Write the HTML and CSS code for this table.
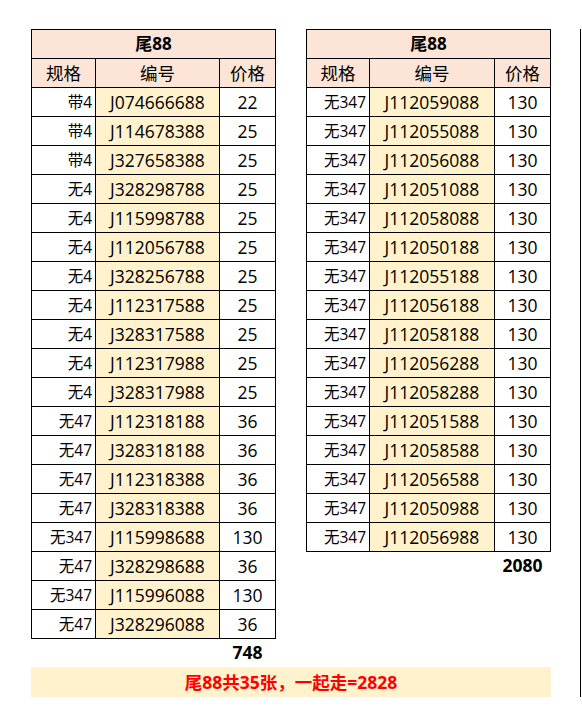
FILE: index.html
```html
<!DOCTYPE html>
<html lang="zh">
<head>
<meta charset="utf-8">
<title>尾88</title>
<link rel="stylesheet" href="styles.css">
</head>
<body>
<div class="page">
  <div class="sheet">
    <div class="tables">
      <div class="block">
        <div class="tbl tbl-l">
          <div class="title">尾88</div>
          <div class="hd">规格</div><div class="hd">编号</div><div class="hd">价格</div>
          <div class="spec">带4</div><div class="code">J074666688</div><div class="price">22</div>
          <div class="spec">带4</div><div class="code">J114678388</div><div class="price">25</div>
          <div class="spec">带4</div><div class="code">J327658388</div><div class="price">25</div>
          <div class="spec">无4</div><div class="code">J328298788</div><div class="price">25</div>
          <div class="spec">无4</div><div class="code">J115998788</div><div class="price">25</div>
          <div class="spec">无4</div><div class="code">J112056788</div><div class="price">25</div>
          <div class="spec">无4</div><div class="code">J328256788</div><div class="price">25</div>
          <div class="spec">无4</div><div class="code">J112317588</div><div class="price">25</div>
          <div class="spec">无4</div><div class="code">J328317588</div><div class="price">25</div>
          <div class="spec">无4</div><div class="code">J112317988</div><div class="price">25</div>
          <div class="spec">无4</div><div class="code">J328317988</div><div class="price">25</div>
          <div class="spec">无47</div><div class="code">J112318188</div><div class="price">36</div>
          <div class="spec">无47</div><div class="code">J328318188</div><div class="price">36</div>
          <div class="spec">无47</div><div class="code">J112318388</div><div class="price">36</div>
          <div class="spec">无47</div><div class="code">J328318388</div><div class="price">36</div>
          <div class="spec">无347</div><div class="code">J115998688</div><div class="price">130</div>
          <div class="spec">无47</div><div class="code">J328298688</div><div class="price">36</div>
          <div class="spec">无347</div><div class="code">J115996088</div><div class="price">130</div>
          <div class="spec">无47</div><div class="code">J328296088</div><div class="price">36</div>
        </div>
        <div class="total tbl-l"><div class="sum">748</div></div>
      </div>
      <div class="block">
        <div class="tbl tbl-r">
          <div class="title">尾88</div>
          <div class="hd">规格</div><div class="hd">编号</div><div class="hd">价格</div>
          <div class="spec">无347</div><div class="code">J112059088</div><div class="price">130</div>
          <div class="spec">无347</div><div class="code">J112055088</div><div class="price">130</div>
          <div class="spec">无347</div><div class="code">J112056088</div><div class="price">130</div>
          <div class="spec">无347</div><div class="code">J112051088</div><div class="price">130</div>
          <div class="spec">无347</div><div class="code">J112058088</div><div class="price">130</div>
          <div class="spec">无347</div><div class="code">J112050188</div><div class="price">130</div>
          <div class="spec">无347</div><div class="code">J112055188</div><div class="price">130</div>
          <div class="spec">无347</div><div class="code">J112056188</div><div class="price">130</div>
          <div class="spec">无347</div><div class="code">J112058188</div><div class="price">130</div>
          <div class="spec">无347</div><div class="code">J112056288</div><div class="price">130</div>
          <div class="spec">无347</div><div class="code">J112058288</div><div class="price">130</div>
          <div class="spec">无347</div><div class="code">J112051588</div><div class="price">130</div>
          <div class="spec">无347</div><div class="code">J112058588</div><div class="price">130</div>
          <div class="spec">无347</div><div class="code">J112056588</div><div class="price">130</div>
          <div class="spec">无347</div><div class="code">J112050988</div><div class="price">130</div>
          <div class="spec">无347</div><div class="code">J112056988</div><div class="price">130</div>
        </div>
        <div class="total tbl-r"><div class="sum">2080</div></div>
      </div>
    </div>
    <div class="banner">尾88共35张，一起走=2828</div>
  </div>
  <div class="vline"></div>
</div>
</body>
</html>
```

FILE: styles.css
```css
html, body {
  margin: 0;
  padding: 0;
  background: #fff;
}

body {
  font-family: "Open Sans", "Noto Sans CJK SC", sans-serif;
  color: #000;
}

.page {
  display: flex;
  align-items: stretch;
  padding: 29px 0 0 31px;
}

.sheet {
  display: flex;
  flex-direction: column;
  width: 520px;
}

.tables {
  display: flex;
  align-items: flex-start;
  gap: 30px;
}

.block {
  display: flex;
  flex-direction: column;
}

.tbl {
  display: grid;
  grid-auto-rows: 28px;
  gap: 1px;
  padding: 1px;
  background: #000;
}

.tbl-l {
  grid-template-columns: 63px 123px 55px;
}

.tbl-r {
  grid-template-columns: 62px 124px 55px;
}

.tbl > div {
  background: #fff;
  line-height: 28px;
  font-size: 17.5px;
  white-space: nowrap;
  text-align: center;
}

.tbl > .title {
  grid-column: 1 / 4;
  background: #fce4d6;
  font-weight: 700;
  font-size: 17px;
}

.tbl > .hd {
  background: #fce4d6;
}

.tbl > .spec {
  text-align: right;
  padding-right: 3px;
  font-size: 15.5px;
}

.tbl > .code {
  background: #fff2cc;
}

.total {
  display: grid;
  gap: 1px;
  padding: 0 1px;
  height: 28px;
}

.sum {
  grid-column: 3;
  text-align: center;
  font-weight: 700;
  font-size: 17.5px;
  line-height: 26px;
}

.banner {
  height: 30px;
  background: #fff2cc;
  color: #ff0000;
  font-weight: 700;
  font-size: 17.5px;
  line-height: 30px;
  text-align: center;
}

.vline {
  width: 1px;
  margin-left: 29px;
  background: #000;
}
```
